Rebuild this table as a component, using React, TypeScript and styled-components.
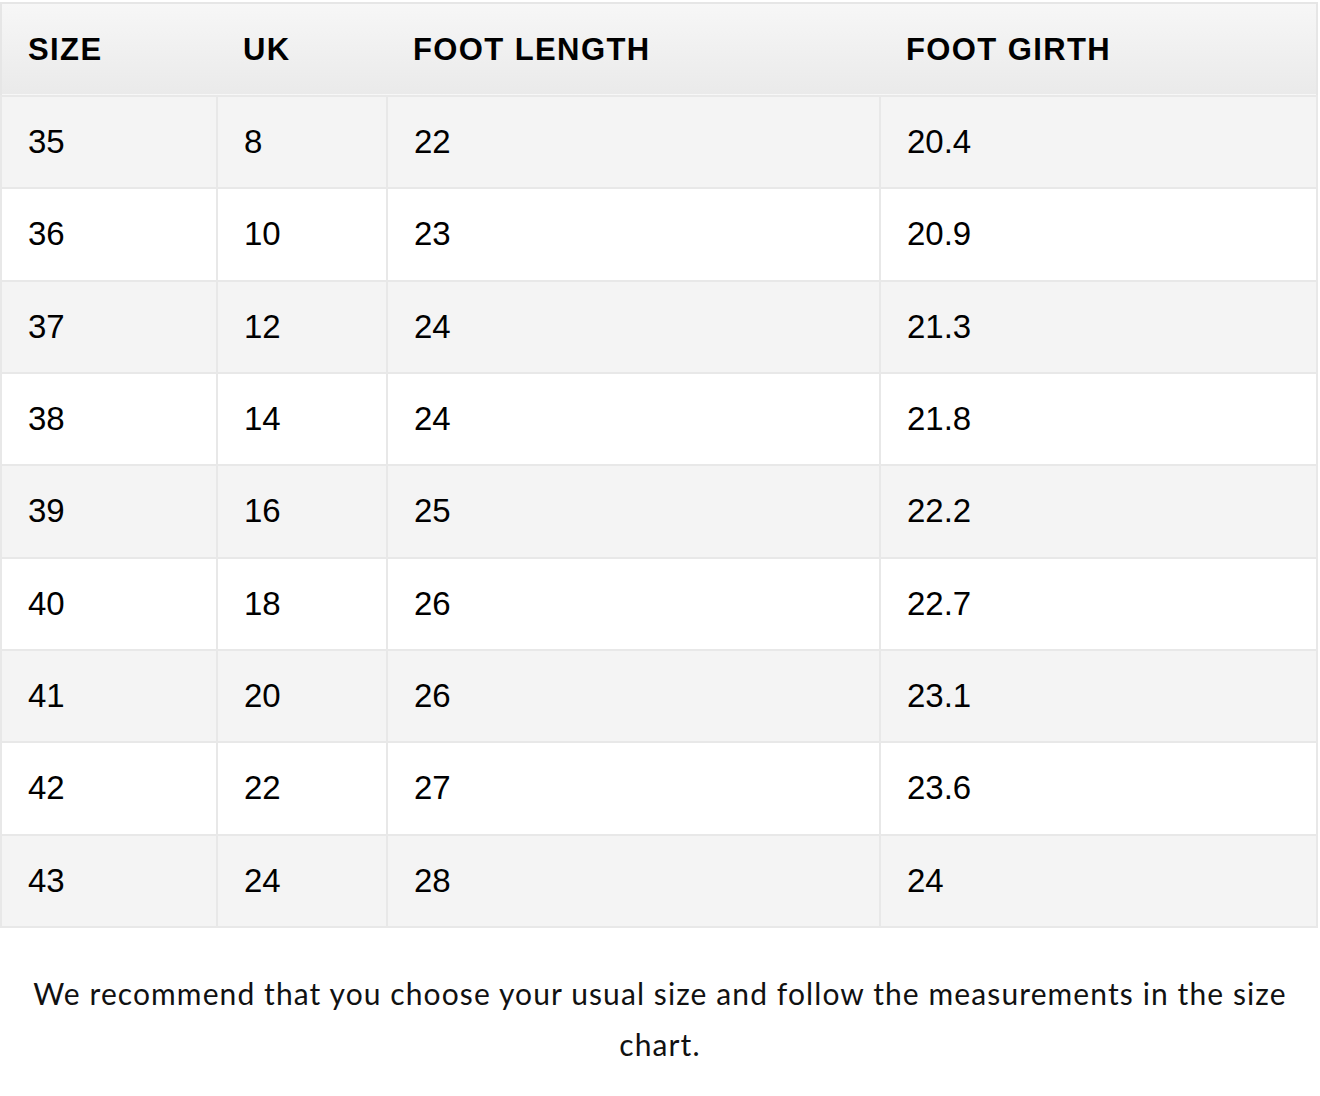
import React from "react";
import styled, { createGlobalStyle } from "styled-components";

const Global = createGlobalStyle`
  html, body { margin: 0; padding: 0; background: #ffffff; }
  body { font-family: "Liberation Sans", Arial, sans-serif; color: #000; }
`;

const Page = styled.div`
  width: 1320px;
  padding-top: 2px;
`;

const Table = styled.table`
  width: 1318px;
  border-collapse: collapse;
  border: 2px solid #e6e6e6;
  table-layout: fixed;
`;

const HeadRow = styled.tr`
  background: linear-gradient(to bottom, #f7f7f7 0%, #efefef 60%, #eaeaea 100%);
  border-bottom: 2px solid #dedede;
`;

const Th = styled.th<{ $w: number }>`
  width: ${(p) => p.$w}px;
  height: 93px;
  padding: 0 0 0 26px;
  text-align: left;
  font-family: "Liberation Sans", Arial, sans-serif;
  font-weight: 700;
  font-size: 31px;
  letter-spacing: 1.4px;
  color: #000;
  box-sizing: border-box;
`;

const Row = styled.tr<{ $shade: boolean }>`
  background: ${(p) => (p.$shade ? "#f4f4f4" : "#ffffff")};
`;

const Td = styled.td`
  height: 92.33px;
  padding: 0 0 0 26px;
  border: 2px solid #e8e8e8;
  font-family: "Liberation Sans", Arial, sans-serif;
  font-size: 33px;
  color: #000;
  box-sizing: border-box;
`;

const Note = styled.p`
  margin: 40px 0 0;
  padding: 0 20px;
  text-align: center;
  font-family: Lato, "Open Sans", sans-serif;
  font-size: 30px;
  line-height: 51px;
  letter-spacing: 1.1px;
  color: #111;
`;

const rows: [string, string, string, string][] = [
  ["35", "8", "22", "20.4"],
  ["36", "10", "23", "20.9"],
  ["37", "12", "24", "21.3"],
  ["38", "14", "24", "21.8"],
  ["39", "16", "25", "22.2"],
  ["40", "18", "26", "22.7"],
  ["41", "20", "26", "23.1"],
  ["42", "22", "27", "23.6"],
  ["43", "24", "28", "24"],
];

export default function App() {
  return (
    <Page>
      <Global />
      <Table>
        <thead>
          <HeadRow>
            <Th $w={216}>SIZE</Th>
            <Th $w={170}>UK</Th>
            <Th $w={493}>FOOT LENGTH</Th>
            <Th $w={437}>FOOT GIRTH</Th>
          </HeadRow>
        </thead>
        <tbody>
          {rows.map((r, i) => (
            <Row key={r[0]} $shade={i % 2 === 0}>
              {r.map((c, j) => (
                <Td key={j}>{c}</Td>
              ))}
            </Row>
          ))}
        </tbody>
      </Table>
      <Note>
        We recommend that you choose your usual size and follow the measurements in the size chart.
      </Note>
    </Page>
  );
}
